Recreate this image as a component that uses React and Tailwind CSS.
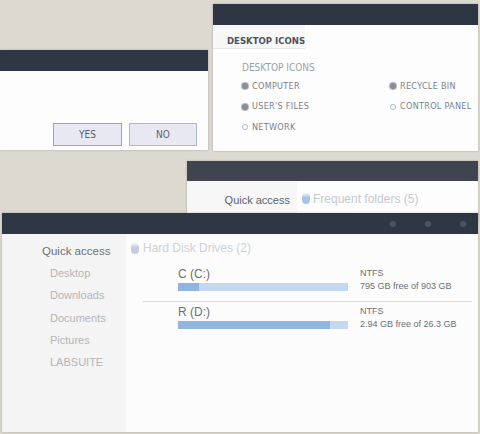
import React from 'react';

const label = { fontFamily: '"DejaVu Sans Condensed", "Liberation Sans", sans-serif' };
const sans = { fontFamily: '"Liberation Sans", Arial, sans-serif' };

function Bullet({ on }) {
  return on ? (
    <span className="w-[6px] h-[6px] rounded-full bg-[#8b8e95] ring-1 ring-[#b5b7bc] shrink-0" />
  ) : (
    <span className="w-[6px] h-[6px] rounded-full border border-[#a9bcd9] bg-white shrink-0" />
  );
}

function IconRow({ on, children }) {
  return (
    <div className="flex items-center gap-[4px] h-[20.5px]">
      <Bullet on={on} />
      <span className="text-[9px] tracking-[0.3px] text-[#7b8089] whitespace-nowrap" style={label}>{children}</span>
    </div>
  );
}

function Pill({ color = '#a9c4e6' }) {
  return (
    <span
      className="block w-[8px] h-[11px] rounded-full shrink-0"
      style={{ background: `linear-gradient(to bottom, #f4f7fb 0%, ${color} 40%, ${color} 100%)` }}
    />
  );
}

function Drive({ name, used, free }) {
  return (
    <div className="flex items-start pl-[52px] h-[39px]">
      <div className="w-[182px]">
        <div className="text-[12px] leading-[14px] text-[#6b6f76] pt-[1px]" style={sans}>{name}</div>
        <div className="mt-[2px] w-[170px] h-[8px] bg-[#c4d9ef]">
          <div className="h-full bg-[#8fb5e0]" style={{ width: `${used}%` }} />
        </div>
      </div>
      <div className="text-[9px] leading-[13px] text-[#6b6f76] pt-[1px]" style={sans}>
        <div>NTFS</div>
        <div>{free}</div>
      </div>
    </div>
  );
}

export default function App() {
  const places = ['Desktop', 'Downloads', 'Documents', 'Pictures', 'LABSUITE'];

  return (
    <div className="relative w-[480px] h-[434px] bg-[#dcd9d1] overflow-hidden">
      {/* confirm dialog */}
      <div className="absolute left-0 top-[50px] w-[208px] h-[100px] bg-[#fdfdfd] flex flex-col shadow-[0_0_2px_rgba(0,0,0,0.25)]">
        <div className="h-[21px] bg-[#2f3745]" />
        <div className="flex-1 flex items-end justify-end gap-[7px] pr-[11px] pb-[4px]">
          <button className="w-[69px] h-[23px] bg-[#e8e8f2] border border-[#a2a3aa] text-[10px] text-[#596070]" style={label}>YES</button>
          <button className="w-[68px] h-[23px] bg-[#e8e8f2] border border-[#abb7d7] text-[10px] text-[#596070]" style={label}>NO</button>
        </div>
      </div>

      {/* desktop icons settings */}
      <div className="absolute left-[213px] top-[4px] w-[265px] h-[147px] bg-[#fdfdfd] flex flex-col shadow-[0_0_2px_rgba(0,0,0,0.25)]">
        <div className="h-[21px] bg-[#2e3543]" />
        <div
          className="w-[92px] h-[24px] pl-[14px] pt-[11px] border-b border-[#e6e6e9] bg-[#f7f7f8] whitespace-nowrap text-[9.5px] leading-[10px] font-bold text-[#4d525b]"
          style={label}
        >
          DESKTOP ICONS
        </div>
        <div className="pl-[29px] pt-[14px]">
          <div className="text-[10px] text-[#9ba0aa] h-[10px] leading-[10px] whitespace-nowrap" style={label}>DESKTOP ICONS</div>
          <div className="flex mt-[3px]">
            <div className="w-[148px]">
              <IconRow on>COMPUTER</IconRow>
              <IconRow on>USER'S FILES</IconRow>
              <IconRow>NETWORK</IconRow>
            </div>
            <div>
              <IconRow on>RECYCLE BIN</IconRow>
              <IconRow>CONTROL PANEL</IconRow>
            </div>
          </div>
        </div>
      </div>

      {/* explorer behind */}
      <div className="absolute left-[187px] top-[161px] w-[291px] h-[60px] bg-[#fdfdfd] flex flex-col shadow-[0_0_2px_rgba(0,0,0,0.25)]">
        <div className="h-[20px] bg-[#3f444e]" />
        <div className="flex flex-1">
          <div className="w-[110px] bg-[#f7f7f7] flex justify-end pr-[7px] pt-[11px]">
            <span className="text-[11px] text-[#5d6169]" style={sans}>Quick access</span>
          </div>
          <div className="flex items-start gap-[3px] pl-[5px] pt-[9px]">
            <span className="mt-[3px]"><Pill /></span>
            <span className="text-[12px] text-[#c6c9ce]" style={sans}>Frequent folders (5)</span>
          </div>
        </div>
      </div>

      {/* explorer front */}
      <div className="absolute left-[2px] top-[213px] w-[476px] h-[219px] bg-[#fcfcfc] flex flex-col shadow-[0_0_2px_rgba(0,0,0,0.25)]">
        <div className="h-[21px] bg-[#2f3644] flex items-center justify-end gap-[29px] pr-[12px]">
          <span className="w-[6px] h-[6px] rounded-full bg-[#4b5261] blur-[0.5px]" />
          <span className="w-[6px] h-[6px] rounded-full bg-[#4b5261] blur-[0.5px]" />
          <span className="w-[6px] h-[6px] rounded-full bg-[#4b5261] blur-[0.5px]" />
        </div>
        <div className="flex flex-1">
          <aside className="w-[124px] bg-[#f4f4f4] pt-[10px]" style={sans}>
            <div className="pl-[40px] h-[22px] text-[11.5px] leading-[14px] text-[#6c7079]">Quick access</div>
            {places.map((p) => (
              <div key={p} className="pl-[48px] h-[22.3px] text-[11px] leading-[14px] text-[#b4b4b6]">{p}</div>
            ))}
          </aside>
          <main className="flex-1 pt-[7px]">
            <div className="flex items-center gap-[4px] pl-[5px] h-[14px]">
              <Pill color="#c8cae0" />
              <span className="text-[12px] text-[#cfd1d7]" style={sans}>Hard Disk Drives (2)</span>
            </div>
            <div className="mt-[11px]">
              <Drive name="C (C:)" used={12.5} free="795 GB free of 903 GB" />
            </div>
            <div className="ml-[17px] mr-[6px] h-px bg-[#d9d9d9] -mt-[4px] mb-[2px]" />
            <Drive name="R (D:)" used={89.5} free="2.94 GB free of 26.3 GB" />
          </main>
        </div>
      </div>
    </div>
  );
}
